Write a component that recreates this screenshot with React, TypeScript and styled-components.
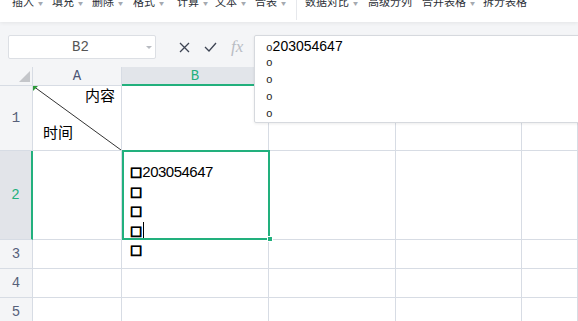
import React from "react";
import styled, { createGlobalStyle } from "styled-components";

const GREEN = "#22b07d";
const LINE = "#d7dce4";

const GlobalStyle = createGlobalStyle`
  html, body {
    margin: 0;
    padding: 0;
    background: #f4f5f7;
  }
  body {
    font-family: "Liberation Sans", "Noto Sans CJK SC", sans-serif;
  }
`;

const Page = styled.div`
  position: relative;
  width: 578px;
  height: 321px;
  overflow: hidden;
  background: #f4f5f7;
`;

const Toolbar = styled.div`
  display: flex;
  align-items: flex-start;
  height: 22px;
  padding-left: 12px;
  background: #fff;
  box-shadow: 0 1px 4px rgba(0, 0, 0, 0.07);
  overflow: hidden;
`;

const ToolItem = styled.span<{ $w: number }>`
  flex: none;
  width: ${(p) => p.$w}px;
  margin-top: -5px;
  font-family: "Noto Sans CJK SC", sans-serif;
  font-size: 11px;
  line-height: 12px;
  color: #2b2f36;
  white-space: nowrap;
`;

const Caret = styled.span`
  margin-left: 4px;
  font-size: 5px;
  color: #a5a9b0;
  vertical-align: middle;
`;

const ToolSep = styled.div`
  flex: none;
  width: 1px;
  height: 20px;
  margin-right: 8px;
  background: #e6e8ec;
`;

const FormulaRow = styled.div`
  display: flex;
  align-items: center;
  height: 24px;
  margin-top: 13px;
  padding-left: 8px;
`;

const NameBox = styled.div`
  display: flex;
  align-items: center;
  box-sizing: border-box;
  width: 148px;
  height: 24px;
  background: #fff;
  border: 1px solid #dcdfe4;
  border-radius: 2px;
`;

const NameText = styled.span`
  flex: 1;
  padding-left: 6px;
  text-align: center;
  font-family: "Liberation Mono", monospace;
  font-size: 14px;
  color: #555;
`;

const DropArrow = styled.span`
  width: 0;
  height: 0;
  margin-right: 3px;
  border-left: 3px solid transparent;
  border-right: 3px solid transparent;
  border-top: 3px solid #b8bbc1;
`;

const Actions = styled.div`
  display: flex;
  align-items: center;
  gap: 14px;
  margin-left: 23px;
`;

const Fx = styled.span`
  font-family: "Liberation Serif", serif;
  font-style: italic;
  font-size: 17px;
  color: #b9bcc3;
`;

const FormulaBox = styled.div`
  position: absolute;
  left: 254px;
  top: 35px;
  z-index: 5;
  box-sizing: border-box;
  width: 340px;
  height: 88px;
  padding: 2px 0 0 11px;
  background: #fff;
  border: 1px solid #d6d9de;
  border-radius: 2px;
  box-shadow: 0 1px 3px rgba(0, 0, 0, 0.08);
  font-size: 14px;
  color: #000;
`;

const FormulaLine = styled.div`
  display: flex;
  align-items: baseline;
  height: 17px;
  line-height: 17px;
`;

const Bullet = styled.span`
  font-family: "Liberation Mono", monospace;
  font-size: 11px;
  line-height: 17px;
  color: #222;
`;

const Sheet = styled.div`
  display: grid;
  grid-template-columns: 33px 89px 147px 127px 126px 56px;
  grid-template-rows: 19px 65px 89px 29px 29px 29px;
  margin-top: 8px;
`;

const Corner = styled.div`
  display: flex;
  align-items: flex-end;
  justify-content: flex-end;
  box-sizing: border-box;
  padding: 0 2px 3px 0;
  background: #f4f5f7;
  border-right: 1px solid ${LINE};
  border-bottom: 1px solid ${LINE};
`;

const ColHeader = styled.div<{ $active?: boolean }>`
  display: flex;
  align-items: center;
  justify-content: center;
  box-sizing: border-box;
  background: ${(p) => (p.$active ? "#e2e5ea" : "#f4f5f7")};
  border-right: 1px solid ${LINE};
  border-bottom: ${(p) => (p.$active ? `2px solid ${GREEN}` : `1px solid ${LINE}`)};
  font-family: "Liberation Mono", monospace;
  font-size: 14px;
  color: ${(p) => (p.$active ? GREEN : "#4b5675")};
`;

const RowHeader = styled.div<{ $active?: boolean }>`
  display: flex;
  align-items: center;
  justify-content: center;
  box-sizing: border-box;
  background: ${(p) => (p.$active ? "#e2e4e9" : "#f4f5f7")};
  border-right: ${(p) => (p.$active ? `2px solid ${GREEN}` : `1px solid ${LINE}`)};
  border-bottom: 1px solid ${LINE};
  font-family: "Liberation Mono", monospace;
  font-size: 14px;
  color: ${(p) => (p.$active ? GREEN : "#56607a")};
`;

const Cell = styled.div`
  box-sizing: border-box;
  background: #fff;
  border-right: 1px solid ${LINE};
  border-bottom: 1px solid ${LINE};
`;

const SplitCell = styled(Cell)`
  position: relative;
  display: flex;
  flex-direction: column;
  justify-content: space-between;
  padding: 0 6px 9px 10px;
  font-family: "Noto Sans CJK SC", sans-serif;
  font-size: 15px;
  line-height: 18px;
  color: #000;
`;

const SplitTop = styled.span`
  align-self: flex-end;
  position: relative;
`;

const SplitBottom = styled.span`
  position: relative;
`;

const Diagonal = styled.svg`
  position: absolute;
  left: 0;
  top: 0;
  width: 100%;
  height: 100%;
`;

const EditCell = styled(Cell)`
  position: relative;
  z-index: 2;
  padding: 11px 0 0 8px;
  font-size: 15px;
  letter-spacing: -0.5px;
  line-height: 19.5px;
  color: #000;
`;

const EditLine = styled.div`
  display: flex;
  align-items: center;
  height: 19.5px;
`;

const Square = styled.span`
  font-family: "DejaVu Sans", sans-serif;
  font-size: 13px;
  letter-spacing: 0;
  -webkit-text-stroke: 0.9px #000;
`;

const TextCursor = styled.span`
  display: inline-block;
  width: 1px;
  height: 17px;
  margin-left: 1px;
  background: #000;
`;

const Selection = styled.div`
  position: absolute;
  top: -1px;
  left: 0;
  right: -2px;
  bottom: -1px;
  border: 2px solid ${GREEN};
  pointer-events: none;
`;

const FillHandle = styled.div`
  position: absolute;
  right: -5px;
  bottom: -4px;
  width: 4px;
  height: 4px;
  background: ${GREEN};
  border: 1px solid #fff;
`;

const tools = [
  { t: "插入", w: 40, c: true },
  { t: "填充", w: 40, c: true },
  { t: "删除", w: 41, c: true },
  { t: "格式", w: 44, c: true },
  { t: "计算", w: 38, c: true },
  { t: "文本", w: 40, c: true },
  { t: "合表", w: 41, c: true },
];

const tools2 = [
  { t: "数据对比", w: 63, c: true },
  { t: "高级分列", w: 54, c: false },
  { t: "合并表格", w: 61, c: true },
  { t: "拆分表格", w: 80, c: false },
];

const cols = ["A", "B", "C", "D", "E"];
const formulaLines = ["203054647", "", "", "", ""];

export default function App() {
  return (
    <Page>
      <GlobalStyle />
      <Toolbar>
        {tools.map((it) => (
          <ToolItem key={it.t} $w={it.w}>
            {it.t}
            {it.c && <Caret>▼</Caret>}
          </ToolItem>
        ))}
        <ToolSep />
        {tools2.map((it) => (
          <ToolItem key={it.t} $w={it.w}>
            {it.t}
            {it.c && <Caret>▼</Caret>}
          </ToolItem>
        ))}
      </Toolbar>

      <FormulaRow>
        <NameBox>
          <NameText>B2</NameText>
          <DropArrow />
        </NameBox>
        <Actions>
          <svg width="11" height="11" viewBox="0 0 11 11">
            <path d="M1 1 L10 10 M10 1 L1 10" stroke="#3d4453" strokeWidth="1.3" fill="none" />
          </svg>
          <svg width="13" height="10" viewBox="0 0 13 10">
            <path d="M1 5 L5 9 L12 1" stroke="#3d4453" strokeWidth="1.3" fill="none" />
          </svg>
          <Fx>fx</Fx>
        </Actions>
      </FormulaRow>

      <FormulaBox>
        {formulaLines.map((txt, i) => (
          <FormulaLine key={i}>
            <Bullet>o</Bullet>
            {txt}
          </FormulaLine>
        ))}
      </FormulaBox>

      <Sheet>
        <Corner>
          <svg width="11" height="11" viewBox="0 0 11 11">
            <path d="M11 0 L11 11 L0 11 Z" fill="#c4c6ca" />
          </svg>
        </Corner>
        {cols.map((c) => (
          <ColHeader key={c} $active={c === "B"}>
            {c}
          </ColHeader>
        ))}

        <RowHeader>1</RowHeader>
        <SplitCell>
          <Diagonal viewBox="0 0 88 64" preserveAspectRatio="none">
            <line x1="0" y1="0" x2="88" y2="64" stroke="#333" strokeWidth="1" />
            <path d="M0 0 L5 0 L0 5 Z" fill="#2e9a3a" />
          </Diagonal>
          <SplitTop>内容</SplitTop>
          <SplitBottom>时间</SplitBottom>
        </SplitCell>
        <Cell />
        <Cell />
        <Cell />
        <Cell />

        <RowHeader $active>2</RowHeader>
        <Cell />
        <EditCell>
          <EditLine>
            <Square>□</Square>203054647
          </EditLine>
          <EditLine>
            <Square>□</Square>
          </EditLine>
          <EditLine>
            <Square>□</Square>
          </EditLine>
          <EditLine>
            <Square>□</Square>
            <TextCursor />
          </EditLine>
          <EditLine>
            <Square>□</Square>
          </EditLine>
          <Selection>
            <FillHandle />
          </Selection>
        </EditCell>
        <Cell />
        <Cell />
        <Cell />

        {["3", "4", "5"].map((r) => (
          <React.Fragment key={r}>
            <RowHeader>{r}</RowHeader>
            <Cell />
            <Cell />
            <Cell />
            <Cell />
            <Cell />
          </React.Fragment>
        ))}
      </Sheet>
    </Page>
  );
}
